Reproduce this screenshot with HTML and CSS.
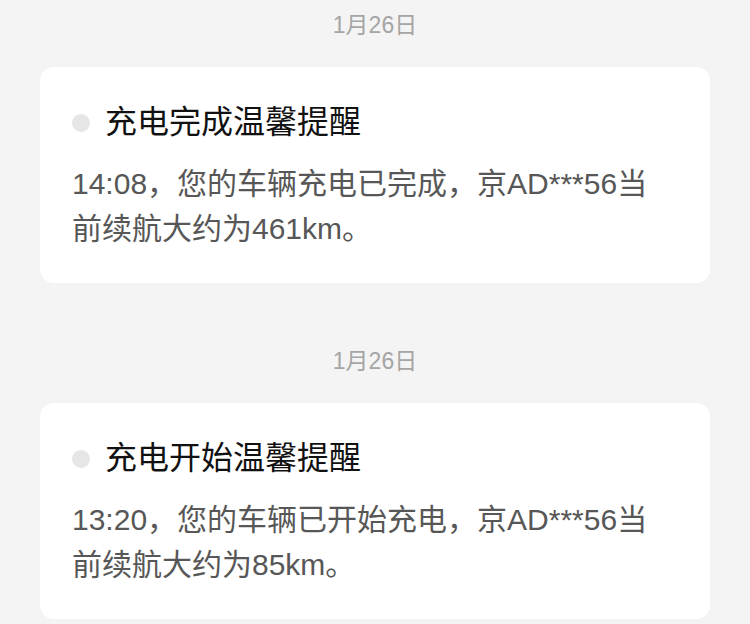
FILE: index.html
```html
<!DOCTYPE html>
<html lang="zh-CN">
<head>
    <meta charset="UTF-8">
    <meta name="viewport" content="width=device-width, initial-scale=1.0">
    <title>消息通知</title>
    <link rel="stylesheet" href="styles.css">
</head>
<body>
    <div class="msg-list">
        <div class="msg-item">
            <div class="msg-date">1月26日</div>
            <div class="msg-card">
                <div class="msg-title">
                    <span class="dot"></span>
                    <span>充电完成温馨提醒</span>
                </div>
                <p class="msg-text">14:08，您的车辆充电已完成，京AD***56当前续航大约为461km。</p>
            </div>
        </div>

        <div class="msg-item">
            <div class="msg-date">1月26日</div>
            <div class="msg-card">
                <div class="msg-title">
                    <span class="dot"></span>
                    <span>充电开始温馨提醒</span>
                </div>
                <p class="msg-text">13:20，您的车辆已开始充电，京AD***56当前续航大约为85km。</p>
            </div>
        </div>
    </div>
</body>
</html>
```

FILE: styles.css
```css
body {
    margin: 0;
    background-color: #f4f4f4;
    font-family: "Liberation Sans", "Noto Sans CJK SC", sans-serif;
}

.msg-list {
    display: flex;
    flex-direction: column;
    gap: 60px;
    padding: 7px 40px 0;
}

.msg-date {
    text-align: center;
    font-size: 23px;
    line-height: 36px;
    color: #a5a5a5;
    margin-bottom: 24px;
}

.msg-card {
    background-color: #fff;
    border-radius: 14px;
    padding: 33px 50px 32px 32px;
}

.msg-title {
    display: flex;
    align-items: center;
    gap: 15px;
    font-size: 32px;
    line-height: 45px;
    color: #111;
    margin-bottom: 16px;
}

.dot {
    width: 18px;
    height: 18px;
    border-radius: 50%;
    background-color: #e6e6e6;
    flex-shrink: 0;
}

.msg-text {
    margin: 0;
    font-size: 30px;
    line-height: 45px;
    color: #575757;
}
```
